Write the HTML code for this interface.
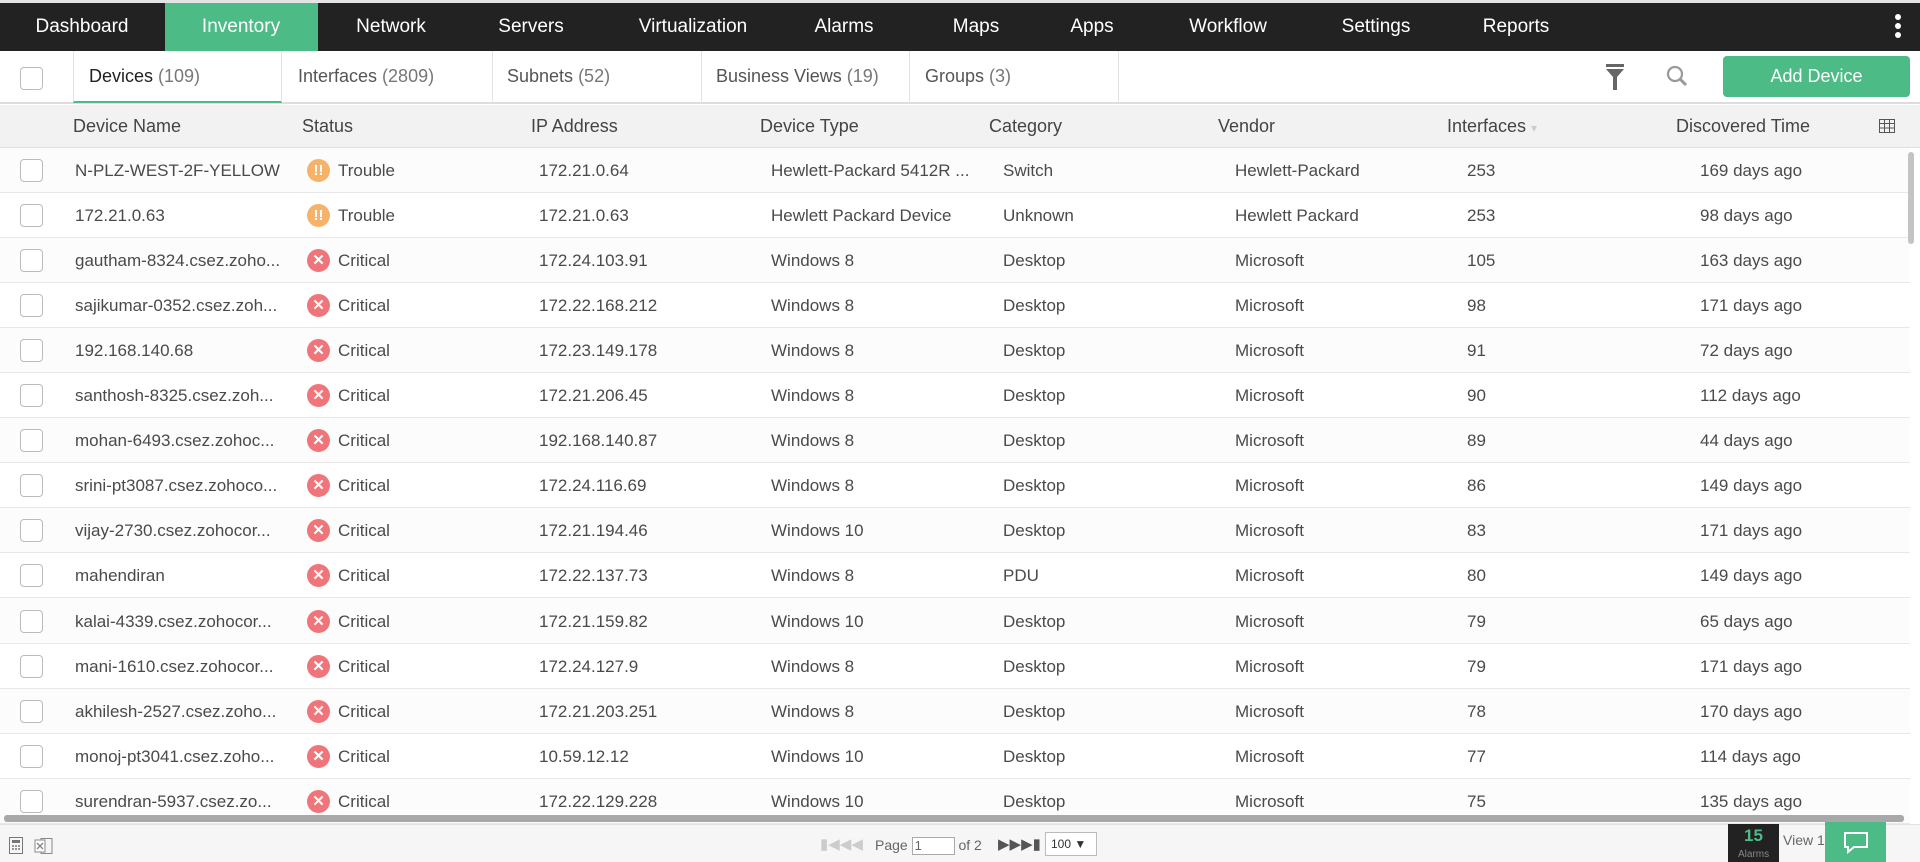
<!DOCTYPE html>
<html><head><meta charset="utf-8"><style>
*{margin:0;padding:0;box-sizing:border-box}
body{width:1920px;height:862px;overflow:hidden;background:#fff;font-family:"Liberation Sans",Arial,sans-serif;position:relative;color:#444}
.a{position:absolute}
#top{left:0;top:0;width:1920px;height:3px;background:#e4e4e4}
#nav{left:0;top:3px;width:1920px;height:48px;background:#222}
.ni{position:absolute;top:3px;height:48px;line-height:48px;color:#fff;font-size:19px;transform:translateX(-50%);white-space:nowrap}
#inv{left:165px;top:3px;width:153px;height:48px;background:#4cbb85}
#tabs{left:0;top:51px;width:1920px;height:53px;border-bottom:2px solid #ddd;background:#fff}
.cb{position:absolute;width:23px;height:23px;border:1px solid #bbb;border-radius:4px;background:#fff}
.tab{position:absolute;top:51px;height:52px;line-height:50px;font-size:18px;color:#555;border-right:1px solid #e3e3e3}
.tab span{color:#777}
#hdr{left:0;top:105px;width:1920px;height:43px;background:#f2f2f2;border-bottom:1px solid #e0e0e0}
.h{position:absolute;top:105px;line-height:43px;font-size:18px;color:#444}
.row{position:absolute;left:0;width:1910px;height:45px;border-bottom:1px solid #e8e8e8}
.c{position:absolute;line-height:45px;font-size:17px;color:#4a4a4a;white-space:nowrap}
.ic{position:absolute;width:23px;height:23px;border-radius:50%;left:307px;top:11px;color:#fff;font-weight:bold;text-align:center;font-size:15px;line-height:23px}
.tr{background:#f7b26a}
.cr{background:#f0757a}
</style></head><body>
<div class="a" id="top"></div>
<div class="a" id="nav"></div>
<div class="a" id="inv"></div>
<div class="ni" style="left:82px">Dashboard</div>
<div class="ni" style="left:241px">Inventory</div>
<div class="ni" style="left:391px">Network</div>
<div class="ni" style="left:531px">Servers</div>
<div class="ni" style="left:693px">Virtualization</div>
<div class="ni" style="left:844px">Alarms</div>
<div class="ni" style="left:976px">Maps</div>
<div class="ni" style="left:1092px">Apps</div>
<div class="ni" style="left:1228px">Workflow</div>
<div class="ni" style="left:1376px">Settings</div>
<div class="ni" style="left:1516px">Reports</div>
<div class="a" style="left:1895px;top:14px;width:6px;height:6px;border-radius:50%;background:#fff"></div>
<div class="a" style="left:1895px;top:23px;width:6px;height:6px;border-radius:50%;background:#fff"></div>
<div class="a" style="left:1895px;top:32px;width:6px;height:6px;border-radius:50%;background:#fff"></div>

<div class="a" id="tabs"></div>
<div class="cb" style="left:20px;top:67px"></div>
<div class="tab" style="left:73px;width:209px;padding-left:15px;color:#222;border-bottom:2px solid #4cbb85;border-left:1px solid #e3e3e3">Devices <span>(109)</span></div>
<div class="tab" style="left:282px;width:211px;padding-left:16px">Interfaces <span>(2809)</span></div>
<div class="tab" style="left:493px;width:209px;padding-left:14px">Subnets <span>(52)</span></div>
<div class="tab" style="left:702px;width:208px;padding-left:14px">Business Views <span>(19)</span></div>
<div class="tab" style="left:910px;width:209px;padding-left:15px">Groups <span>(3)</span></div>
<svg class="a" style="left:1604px;top:63px" width="22" height="28" viewBox="0 0 22 28"><rect x="2" y="1" width="18" height="3" fill="#666"/><path d="M2 6H20L13 14V27H9V14Z" fill="#666"/></svg>
<svg class="a" style="left:1665px;top:64px" width="24" height="24" viewBox="0 0 24 24"><circle cx="10" cy="10" r="7" fill="none" stroke="#999" stroke-width="2.2"/><path d="M15 15L21 21" stroke="#999" stroke-width="3"/></svg>
<div class="a" style="left:1723px;top:56px;width:187px;height:41px;background:#4cbb85;border-radius:4px;color:#fff;font-size:18px;line-height:41px;text-align:center">Add Device</div>

<div class="a" id="hdr"></div>
<div class="h" style="left:73px">Device Name</div>
<div class="h" style="left:302px">Status</div>
<div class="h" style="left:531px">IP Address</div>
<div class="h" style="left:760px">Device Type</div>
<div class="h" style="left:989px">Category</div>
<div class="h" style="left:1218px">Vendor</div>
<div class="h" style="left:1447px">Interfaces <span style="color:#ccc;font-size:12px">&#9662;</span></div>
<div class="h" style="left:1676px">Discovered Time</div>
<svg class="a" style="left:1879px;top:119px" width="16" height="14" viewBox="0 0 16 14"><rect x="0.5" y="0.5" width="15" height="13" fill="none" stroke="#555"/><path d="M0 4.5H16M0 9H16M5.5 0V14M10.5 0V14" stroke="#555"/></svg>

<div id="rows"></div>
<script>
var d=[
["N-PLZ-WEST-2F-YELLOW","t","172.21.0.64","Hewlett-Packard 5412R ...","Switch","Hewlett-Packard","253","169 days ago"],
["172.21.0.63","t","172.21.0.63","Hewlett Packard Device","Unknown","Hewlett Packard","253","98 days ago"],
["gautham-8324.csez.zoho...","c","172.24.103.91","Windows 8","Desktop","Microsoft","105","163 days ago"],
["sajikumar-0352.csez.zoh...","c","172.22.168.212","Windows 8","Desktop","Microsoft","98","171 days ago"],
["192.168.140.68","c","172.23.149.178","Windows 8","Desktop","Microsoft","91","72 days ago"],
["santhosh-8325.csez.zoh...","c","172.21.206.45","Windows 8","Desktop","Microsoft","90","112 days ago"],
["mohan-6493.csez.zohoc...","c","192.168.140.87","Windows 8","Desktop","Microsoft","89","44 days ago"],
["srini-pt3087.csez.zohoco...","c","172.24.116.69","Windows 8","Desktop","Microsoft","86","149 days ago"],
["vijay-2730.csez.zohocor...","c","172.21.194.46","Windows 10","Desktop","Microsoft","83","171 days ago"],
["mahendiran","c","172.22.137.73","Windows 8","PDU","Microsoft","80","149 days ago"],
["kalai-4339.csez.zohocor...","c","172.21.159.82","Windows 10","Desktop","Microsoft","79","65 days ago"],
["mani-1610.csez.zohocor...","c","172.24.127.9","Windows 8","Desktop","Microsoft","79","171 days ago"],
["akhilesh-2527.csez.zoho...","c","172.21.203.251","Windows 8","Desktop","Microsoft","78","170 days ago"],
["monoj-pt3041.csez.zoho...","c","10.59.12.12","Windows 10","Desktop","Microsoft","77","114 days ago"],
["surendran-5937.csez.zo...","c","172.22.129.228","Windows 10","Desktop","Microsoft","75","135 days ago"]];
var xs=[75,338,539,771,1003,1235,1467,1700],h="";
d.forEach(function(r,i){var t=148+i*45.05;
h+='<div class="row" style="top:'+t+'px;background:'+(i%2?'#fff':'#fcfcfc')+'"><div class="cb" style="left:20px;top:11px"></div>';
h+='<div class="ic '+(r[1]=="t"?"tr":"cr")+'">'+(r[1]=="t"?"!!":"&#10005;")+'</div>';
for(var k=0;k<8;k++){if(k==1){h+='<div class="c" style="left:338px">'+(r[1]=="t"?"Trouble":"Critical")+'</div>';continue;}
h+='<div class="c" style="left:'+xs[k]+'px">'+r[k]+'</div>';}
h+='</div>';});
document.getElementById('rows').innerHTML=h;
</script>
<div class="a" style="left:1908px;top:152px;width:6px;height:92px;background:#c4c4c4;border-radius:3px"></div>
<div class="a" style="left:4px;top:815px;width:1900px;height:7px;background:#a8a8a8;border-radius:3px"></div>
<div class="a" style="left:0;top:824px;width:1920px;height:38px;background:#f6f6f6;border-top:1px solid #e2e2e2"></div>
<svg class="a" style="left:9px;top:837px" width="14" height="17" viewBox="0 0 14 17"><rect x="0.5" y="0.5" width="13" height="16" fill="none" stroke="#777"/><rect x="3" y="3" width="8" height="3" fill="#777"/><path d="M3 9h2M6 9h2M9 9h2M3 12h2M6 12h2M9 12h2" stroke="#777" stroke-width="1.5"/></svg>
<svg class="a" style="left:34px;top:837px" width="20" height="18" viewBox="0 0 20 18"><rect x="7" y="1.5" width="11" height="15" fill="none" stroke="#888"/><rect x="1" y="3" width="10" height="12" fill="#fff" stroke="#888"/><path d="M3 6l6 6M9 6l-6 6" stroke="#888" stroke-width="1.4"/></svg>
<div class="a" style="left:820px;top:836px;font-size:15px;color:#ccc;line-height:18px">&#9646;&#9664;&#9664;&#9664;</div>
<div class="a" style="left:875px;top:834px;font-size:14px;color:#666;line-height:22px">Page <span style="display:inline-block;width:43px;height:18px;border:1px solid #aaa;background:#fff;vertical-align:middle;font-size:13px;line-height:16px;padding-left:2px">1</span> of 2</div>
<div class="a" style="left:998px;top:836px;font-size:15px;color:#555;line-height:18px">&#9654;&#9654;&#9654;&#9646;</div>
<div class="a" style="left:1045px;top:832px;width:52px;height:24px;border:1px solid #bbb;background:#fff;font-size:12px;line-height:22px;padding-left:5px;color:#333">100 &#9660;</div>
<div class="a" style="left:1728px;top:824px;width:51px;height:38px;background:#222"></div>
<div class="a" style="left:1744px;top:826px;font-size:17px;font-weight:bold;color:#4cbb85">15</div>
<div class="a" style="left:1738px;top:849px;font-size:10px;color:#888">Alarms</div>
<div class="a" style="left:1783px;top:832px;font-size:14px;color:#666">View 1 - 109</div>
<div class="a" style="left:1825px;top:822px;width:61px;height:40px;background:#4cbb85"></div>
<svg class="a" style="left:1842px;top:830px" width="28" height="24" viewBox="0 0 28 24"><path d="M3 3H25V17H12L6 22V17H3Z" fill="none" stroke="#fff" stroke-width="2"/></svg>
</body></html>
